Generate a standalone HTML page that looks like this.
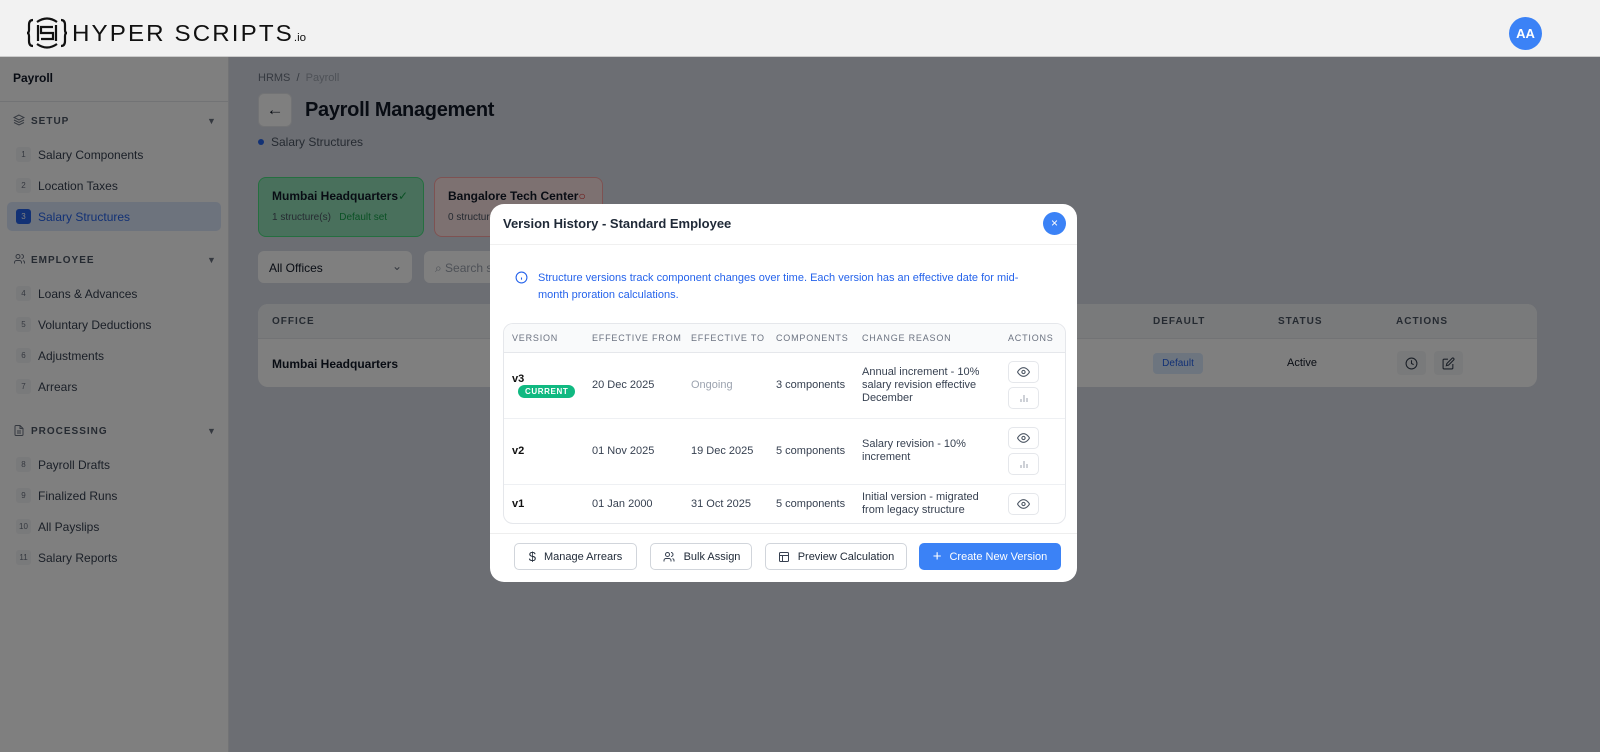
<!DOCTYPE html>
<html><head><meta charset="utf-8"><style>
*{box-sizing:border-box;margin:0;padding:0}
body{width:1600px;height:752px;overflow:hidden;font-family:"Liberation Sans",sans-serif;background:#d9dde6;position:relative;color:#111827}
.hdr{position:absolute;left:0;top:0;width:1600px;height:57px;background:#f2f2f2;border-bottom:1px solid #ccc;z-index:5}
.av{position:absolute;left:1509px;top:17px;width:33px;height:33px;border-radius:50%;background:#3b82f6;color:#fff;font-weight:bold;font-size:13px;text-align:center;line-height:33px}
.side{position:absolute;left:0;top:57px;width:229px;height:695px;background:#fff;border-right:1px solid #e5e7eb}
.abs{position:absolute}
.sec{position:absolute;left:31px;font-size:10px;font-weight:bold;letter-spacing:1px;color:#4b5563}
.it{position:absolute;left:16px;font-size:12px;color:#374151;display:flex;align-items:center}
.it b{display:inline-block;width:15px;height:15px;background:#f3f4f6;border-radius:3px;font-size:8px;color:#6b7280;text-align:center;line-height:15px;margin-right:7px;font-weight:normal}
.arr{position:absolute;left:207px;font-size:9px;color:#6b7280}
.ov{position:absolute;left:0;top:57px;width:1600px;height:695px;background:rgba(0,0,0,.5)}
.modal{position:absolute;left:490px;top:204px;width:587px;height:378px;background:#fff;border-radius:14px;overflow:hidden}
th{font-size:9px;font-weight:normal;letter-spacing:.8px;color:#6b7280;text-align:left;background:#f9fafb;height:28px;border-bottom:1px solid #e5e7eb;padding-left:8px}
td{font-size:11px;color:#374151;padding-left:8px;border-bottom:1px solid #eef0f3;vertical-align:middle}
.ib{width:31px;height:22px;border:1px solid #e5e7eb;border-radius:5px;display:flex;align-items:center;justify-content:center;margin:4px 0}
.btn{position:absolute;top:339px;height:27px;border:1px solid #d1d5db;border-radius:5px;font-size:11px;color:#1f2937;display:flex;align-items:center;justify-content:center;gap:8px;background:#fff}
</style></head><body>
<div class="hdr">
<svg class="abs" style="left:26px;top:16px" width="42" height="34" viewBox="0 0 42 34" fill="none" stroke="#111" stroke-width="2.2"><path d="M7 4 Q3 4 3 9 V14 Q3 17 1 17 Q3 17 3 20 V25 Q3 30 7 30"/><path d="M35 4 Q39 4 39 9 V14 Q39 17 41 17 Q39 17 39 20 V25 Q39 30 35 30"/><path d="M11 6 Q21 -1 31 6 M11 28 Q21 35 31 28"/><path d="M27 11 H15 V17 H27 V23 H15"/><path d="M12 9 V25 M30 9 V25"/></svg>
<div class="abs" style="left:72px;top:20px;font-size:23px;letter-spacing:2px;font-weight:normal;color:#111;transform:scaleX(1.05);transform-origin:left">HYPER SCRIPTS<span style="font-size:11px;letter-spacing:0">.io</span></div>
<div class="av">AA</div>
</div>
<div class="side">
<div class="abs" style="left:13px;top:14px;font-size:12px;font-weight:bold">Payroll</div>
<div class="abs" style="left:0;top:44px;width:229px;border-top:1px solid #e5e7eb"></div>
<svg class="abs" style="left:13px;top:57px" width="12" height="12" viewBox="0 0 24 24" fill="none" stroke="#6b7280" stroke-width="2"><path d="M12 2 2 7l10 5 10-5zM2 12l10 5 10-5M2 17l10 5 10-5"/></svg>
<div class="sec" style="top:59px">SETUP</div><div class="arr" style="top:59px">▼</div>
<div class="it" style="top:90px"><b>1</b>Salary Components</div>
<div class="it" style="top:121px"><b>2</b>Location Taxes</div>
<div class="abs" style="left:7px;top:145px;width:214px;height:29px;background:#dbe6fb;border-radius:5px"></div>
<div class="it" style="top:152px;color:#2563eb"><b style="background:#2563eb;color:#fff">3</b>Salary Structures</div>
<svg class="abs" style="left:13px;top:196px" width="13" height="12" viewBox="0 0 24 24" fill="none" stroke="#6b7280" stroke-width="2"><circle cx="9" cy="7" r="4"/><path d="M2 21v-2a4 4 0 0 1 4-4h6a4 4 0 0 1 4 4v2M16 3a4 4 0 0 1 0 8M22 21v-2a4 4 0 0 0-3-3.9"/></svg>
<div class="sec" style="top:198px">EMPLOYEE</div><div class="arr" style="top:198px">▼</div>
<div class="it" style="top:229px"><b>4</b>Loans &amp; Advances</div>
<div class="it" style="top:260px"><b>5</b>Voluntary Deductions</div>
<div class="it" style="top:291px"><b>6</b>Adjustments</div>
<div class="it" style="top:322px"><b>7</b>Arrears</div>
<svg class="abs" style="left:13px;top:367px" width="12" height="13" viewBox="0 0 24 24" fill="none" stroke="#6b7280" stroke-width="2"><path d="M14 2H6a2 2 0 0 0-2 2v16a2 2 0 0 0 2 2h12a2 2 0 0 0 2-2V8zM14 2v6h6M8 13h8M8 17h8"/></svg>
<div class="sec" style="top:369px">PROCESSING</div><div class="arr" style="top:369px">▼</div>
<div class="it" style="top:400px"><b>8</b>Payroll Drafts</div>
<div class="it" style="top:431px"><b>9</b>Finalized Runs</div>
<div class="it" style="top:462px"><b>10</b>All Payslips</div>
<div class="it" style="top:493px"><b>11</b>Salary Reports</div>
</div>
<!-- main -->
<div class="abs" style="left:258px;top:72px;font-size:11px;color:#6b7280">HRMS &nbsp;/&nbsp; <span style="color:#9ca3af">Payroll</span></div>
<div class="abs" style="left:258px;top:93px;width:34px;height:34px;background:#fff;border-radius:6px;border:1px solid #e5e7eb;font-size:17px;text-align:center;line-height:31px">←</div>
<div class="abs" style="left:305px;top:99px;font-size:20px;font-weight:bold;letter-spacing:-.3px">Payroll Management</div>
<div class="abs" style="left:258px;top:139px;width:6px;height:6px;border-radius:50%;background:#2563eb"></div>
<div class="abs" style="left:271px;top:135px;font-size:12px;color:#4b5563">Salary Structures</div>
<div class="abs" style="left:258px;top:177px;width:166px;height:60px;background:#93e0b9;border:1px solid #4ade80;border-radius:8px"></div>
<div class="abs" style="left:272px;top:189px;font-size:12px;font-weight:bold">Mumbai Headquarters<span style="color:#16a34a;font-weight:normal">✓</span></div>
<div class="abs" style="left:272px;top:212px;font-size:10px;color:#4b5563">1 structure(s) &nbsp;&nbsp;<span style="color:#16a34a">Default set</span></div>
<div class="abs" style="left:434px;top:177px;width:169px;height:60px;background:#fbe3e3;border:1px solid #fca5a5;border-radius:8px"></div>
<div class="abs" style="left:448px;top:189px;font-size:12px;font-weight:bold">Bangalore Tech Center<span style="color:#dc2626;font-weight:normal">○</span></div>
<div class="abs" style="left:448px;top:212px;font-size:10px;color:#4b5563">0 structure(s)</div>
<div class="abs" style="left:258px;top:251px;width:154px;height:32px;background:#fff;border-radius:6px;font-size:12px;padding:10px 11px">All Offices<span style="position:absolute;right:10px;top:8px;color:#6b7280">⌄</span></div>
<div class="abs" style="left:424px;top:251px;width:200px;height:32px;background:#fff;border-radius:6px;font-size:12px;padding:10px 11px;color:#9ca3af">⌕ Search s</div>
<div class="abs" style="left:258px;top:304px;width:1279px;height:83px;background:#fff;border-radius:10px;overflow:hidden">
<div style="height:35px;background:#f3f4f6;border-bottom:1px solid #e5e7eb"></div>
<div class="abs" style="left:14px;top:12px;font-size:10px;letter-spacing:1px;color:#4b5563;font-weight:bold">OFFICE</div>
<div class="abs" style="left:895px;top:12px;font-size:10px;letter-spacing:1px;color:#4b5563;font-weight:bold">DEFAULT</div>
<div class="abs" style="left:1020px;top:12px;font-size:10px;letter-spacing:1px;color:#4b5563;font-weight:bold">STATUS</div>
<div class="abs" style="left:1138px;top:12px;font-size:10px;letter-spacing:1px;color:#4b5563;font-weight:bold">ACTIONS</div>
<div class="abs" style="left:14px;top:53px;font-size:12px;font-weight:bold">Mumbai Headquarters</div>
<div class="abs" style="left:895px;top:49px;width:50px;height:21px;background:#dbeafe;border-radius:4px;color:#2563eb;font-size:10px;text-align:center;line-height:21px">Default</div>
<div class="abs" style="left:1029px;top:53px;font-size:11px">Active</div>
<div class="abs" style="left:1139px;top:47px;width:29px;height:24px;background:#f3f4f6;border-radius:4px;display:flex;align-items:center;justify-content:center"><svg width="13" height="13" viewBox="0 0 24 24" fill="none" stroke="#374151" stroke-width="2"><circle cx="12" cy="12" r="10"/><path d="M12 6v6l4 2"/></svg></div>
<div class="abs" style="left:1176px;top:47px;width:29px;height:24px;background:#f3f4f6;border-radius:4px;display:flex;align-items:center;justify-content:center"><svg width="13" height="13" viewBox="0 0 24 24" fill="none" stroke="#374151" stroke-width="2"><path d="M11 4H4a2 2 0 0 0-2 2v14a2 2 0 0 0 2 2h14a2 2 0 0 0 2-2v-7"/><path d="M18.5 2.5a2.1 2.1 0 0 1 3 3L12 15l-4 1 1-4z"/></svg></div>
</div>
<div class="ov"></div>
<div class="modal">
<div class="abs" style="left:13px;top:12px;font-size:13px;font-weight:bold;color:#1f2937">Version History - Standard Employee</div>
<div class="abs" style="left:553px;top:8px;width:23px;height:23px;border-radius:50%;background:#3b82f6;color:#fff;font-size:12px;text-align:center;line-height:23px">×</div>
<div class="abs" style="left:0;top:40px;width:587px;border-top:1px solid #f0f0f0"></div>
<svg class="abs" style="left:25px;top:67px" width="13" height="13" viewBox="0 0 24 24" fill="none" stroke="#2563eb" stroke-width="2"><circle cx="12" cy="12" r="10"/><path d="M12 16v-4M12 8h0"/></svg>
<div class="abs" style="left:48px;top:66px;width:500px;font-size:11px;line-height:17px;color:#2563eb">Structure versions track component changes over time. Each version has an effective date for mid-month proration calculations.</div>
<div class="abs" style="left:13px;top:119px;width:563px;height:201px;border:1px solid #e5e7eb;border-radius:10px;overflow:hidden">
<table style="border-collapse:collapse;width:100%">
<tr><th style="width:80px">VERSION</th><th style="width:99px">EFFECTIVE FROM</th><th style="width:85px">EFFECTIVE TO</th><th style="width:86px">COMPONENTS</th><th style="width:146px">CHANGE REASON</th><th>ACTIONS</th></tr>
<tr style="height:66px"><td><b style="color:#111">v3</b><br><span style="display:inline-block;background:#10b981;color:#fff;font-size:8px;font-weight:bold;letter-spacing:.6px;padding:2px 7px;border-radius:8px;margin-left:6px">CURRENT</span></td><td>20 Dec 2025</td><td style="color:#9ca3af">Ongoing</td><td>3 components</td><td style="line-height:13px">Annual increment - 10% salary revision effective December</td><td><div class="ib"><svg width="13" height="10" viewBox="0 0 24 18" fill="none" stroke="#4b5563" stroke-width="2"><path d="M1 9s4-8 11-8 11 8 11 8-4 8-11 8S1 9 1 9z"/><circle cx="12" cy="9" r="3"/></svg></div><div class="ib"><svg width="10" height="10" viewBox="0 0 10 10" stroke="#9ca3af" stroke-width="1"><path d="M2 9V6M5 9V2M8 9V5"/></svg></div></td></tr>
<tr style="height:66px"><td><b style="color:#111">v2</b></td><td>01 Nov 2025</td><td>19 Dec 2025</td><td>5 components</td><td style="line-height:13px">Salary revision - 10% increment</td><td><div class="ib"><svg width="13" height="10" viewBox="0 0 24 18" fill="none" stroke="#4b5563" stroke-width="2"><path d="M1 9s4-8 11-8 11 8 11 8-4 8-11 8S1 9 1 9z"/><circle cx="12" cy="9" r="3"/></svg></div><div class="ib"><svg width="10" height="10" viewBox="0 0 10 10" stroke="#9ca3af" stroke-width="1"><path d="M2 9V6M5 9V2M8 9V5"/></svg></div></td></tr>
<tr style="height:40px"><td style="border:0"><b style="color:#111">v1</b></td><td style="border:0">01 Jan 2000</td><td style="border:0">31 Oct 2025</td><td style="border:0">5 components</td><td style="border:0;line-height:13px">Initial version - migrated from legacy structure</td><td style="border:0"><div class="ib"><svg width="13" height="10" viewBox="0 0 24 18" fill="none" stroke="#4b5563" stroke-width="2"><path d="M1 9s4-8 11-8 11 8 11 8-4 8-11 8S1 9 1 9z"/><circle cx="12" cy="9" r="3"/></svg></div></td></tr>
</table></div>
<div class="abs" style="left:0;top:329px;width:587px;border-top:1px solid #eee"></div>
<div class="btn" style="left:24px;width:123px"><span style="font-size:13px">$</span>Manage Arrears</div>
<div class="btn" style="left:160px;width:102px"><svg width="14" height="12" viewBox="0 0 24 24" fill="none" stroke="#374151" stroke-width="2"><circle cx="9" cy="7" r="4"/><path d="M2 21v-2a4 4 0 0 1 4-4h6a4 4 0 0 1 4 4v2M16 3a4 4 0 0 1 0 8M22 21v-2a4 4 0 0 0-3-3.9"/></svg>Bulk Assign</div>
<div class="btn" style="left:275px;width:142px"><svg width="12" height="12" viewBox="0 0 24 24" fill="none" stroke="#374151" stroke-width="2"><rect x="3" y="3" width="18" height="18" rx="2"/><path d="M3 9h18M9 9v12"/></svg>Preview Calculation</div>
<div class="btn" style="left:429px;width:142px;background:#3b82f6;border-color:#3b82f6;color:#fff"><span style="font-size:15px">+</span>Create New Version</div>
</div>
</body></html>
